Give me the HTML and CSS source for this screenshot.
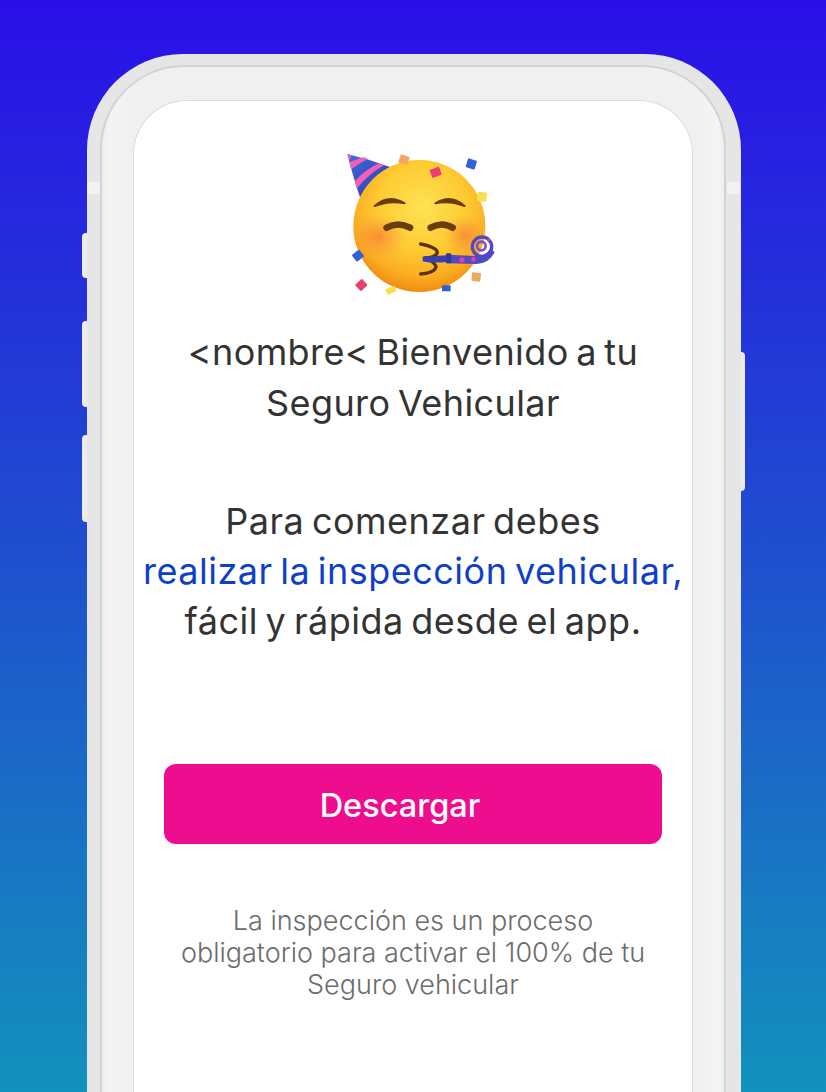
FILE: index.html
```html
<!DOCTYPE html>
<html lang="es">
<head>
    <meta charset="UTF-8">
    <meta name="viewport" content="width=device-width, initial-scale=1.0">
    <title>Seguro Vehicular</title>
    <link rel="stylesheet" href="styles.css">
</head>
<body>

    <div class="phone">
        <span class="side-btn side-silent"></span>
        <span class="side-btn side-vol-up"></span>
        <span class="side-btn side-vol-down"></span>
        <span class="side-btn side-power"></span>
        <span class="band band-left"></span>
        <span class="band band-right"></span>

        <div class="phone-rim">
            <div class="phone-bezel">
                <div class="screen">

                    <svg class="party-emoji" viewBox="0 0 540 510" width="180" height="170">
                        <defs>
                            <radialGradient id="face" cx="52%" cy="36%" r="66%">
                                <stop offset="0" stop-color="#ffe254"/>
                                <stop offset="0.5" stop-color="#fecb32"/>
                                <stop offset="0.8" stop-color="#fbac22"/>
                                <stop offset="1" stop-color="#ee860e"/>
                            </radialGradient>
                            <radialGradient id="blush">
                                <stop offset="0" stop-color="#f9793a" stop-opacity="0.7"/>
                                <stop offset="0.6" stop-color="#fa8a3a" stop-opacity="0.32"/>
                                <stop offset="1" stop-color="#fb9a3c" stop-opacity="0"/>
                            </radialGradient>
                            <linearGradient id="hat" x1="0" y1="0" x2="1" y2="1">
                                <stop offset="0" stop-color="#3f6ae0"/>
                                <stop offset="1" stop-color="#2c3aa8"/>
                            </linearGradient>
                        </defs>

                        <!-- hat -->
                        <path d="M52 42 Q120 58 182 82 L90 172 Q66 100 52 42Z" fill="url(#hat)"/>
                        <path d="M58 66 Q80 58 100 52 L114 56 Q88 68 64 88Z" fill="#f060b8"/>
                        <path d="M74 124 Q102 92 146 70 L162 76 Q116 102 80 146Z" fill="#f060b8"/>
                        <path d="M52 42 L66 46 L58 60Z" fill="#f060b8"/>

                        <!-- face -->
                        <circle cx="268" cy="258" r="198" fill="url(#face)"/>
                        <ellipse cx="145" cy="290" rx="86" ry="66" fill="url(#blush)"/>
                        <ellipse cx="405" cy="285" rx="66" ry="60" fill="url(#blush)"/>

                        <!-- brows and eyes -->
                        <path d="M134 198 Q176 160 224 190 Q178 180 134 198Z" fill="#6b3d0c" stroke="#6b3d0c" stroke-width="6" stroke-linejoin="round"/>
                        <path d="M316 190 Q362 160 404 198 Q360 180 316 190Z" fill="#6b3d0c" stroke="#6b3d0c" stroke-width="6" stroke-linejoin="round"/>
                        <path d="M170 263 Q204 244 240 263" fill="none" stroke="#6b3d0c" stroke-width="20" stroke-linecap="round"/>
                        <path d="M302 263 Q336 244 368 263" fill="none" stroke="#6b3d0c" stroke-width="20" stroke-linecap="round"/>

                        <!-- mouth -->
                        <path d="M272 312 Q322 322 322 338 Q318 352 284 354 Q318 368 318 382 Q312 400 272 402" fill="none" stroke="#5b320a" stroke-width="10" stroke-linecap="round" stroke-linejoin="round"/>

                        <!-- blower -->
                        <path d="M278 350 L350 346 L350 366 Q300 370 278 364Z" fill="#3a3fb0"/>
                        <path d="M350 344 L440 348 Q470 346 480 326 L494 336 Q478 370 440 372 L350 370Z" fill="#5048c4"/>
                        <circle cx="396" cy="360" r="8" fill="#e0409e"/>
                        <circle cx="430" cy="358" r="7" fill="#e0409e"/>
                        <rect x="348" y="340" width="16" height="30" rx="3" fill="#2a3aa0"/>
                        <circle cx="456" cy="320" r="29" fill="none" stroke="#4f48c8" stroke-width="10"/>
                        <circle cx="454" cy="318" r="13" fill="none" stroke="#7a50d0" stroke-width="8"/>
                        <circle cx="476" cy="300" r="4" fill="#e0409e"/>

                        <!-- confetti -->
                        <rect x="208" y="46" width="28" height="26" rx="3" fill="#f0a860" transform="rotate(18 222 59)"/>
                        <rect x="302" y="84" width="30" height="26" rx="3" fill="#e83c78" transform="rotate(-20 317 97)"/>
                        <rect x="410" y="58" width="28" height="28" rx="3" fill="#2f62d8" transform="rotate(18 424 72)"/>
                        <rect x="442" y="156" width="28" height="28" rx="3" fill="#f8e050" transform="rotate(6 456 170)"/>
                        <rect x="70" y="334" width="28" height="26" rx="3" fill="#2f62d8" transform="rotate(-38 84 347)"/>
                        <rect x="80" y="422" width="28" height="26" rx="3" fill="#e84068" transform="rotate(-42 94 435)"/>
                        <rect x="168" y="442" width="30" height="18" rx="2" fill="#f8e050" transform="rotate(-24 183 451)"/>
                        <rect x="336" y="436" width="26" height="18" rx="2" fill="#2f62d8"/>
                        <rect x="425" y="398" width="27" height="26" rx="3" fill="#f0a860" transform="rotate(6 438 411)"/>
                    </svg>

                    <h1 class="welcome">&lt;nombre&lt; Bienvenido a tu<br>Seguro Vehicular</h1>

                    <p class="intro">
                        Para comenzar debes<br>
                        <span class="highlight">realizar la inspección vehicular,</span><br>
                        fácil y rápida desde el app.
                    </p>

                    <a class="download-btn" href="#">Descargar</a>

                    <p class="note">
                        La inspección es un proceso<br>
                        obligatorio para activar el 100% de tu<br>
                        Seguro vehicular
                    </p>

                </div>
            </div>
        </div>
    </div>

</body>
</html>
```

FILE: styles.css
```css
html, body {
    margin: 0;
    height: 1092px;
    overflow: hidden;
}
body {
    font-family: Inter, "Open Sans", sans-serif;
    background: linear-gradient(180deg, #2a0fe8 0%, #2335d8 30%, #1f4ecf 50%, #1a6cc6 72%, #1292bc 100%);
    padding: 54px 0 0 87px;
    box-sizing: border-box;
}

/* phone frame */
.phone {
    position: relative;
    width: 654px;
    height: 1038px;
}
.phone-rim {
    background: #e6e6e6;
    border-radius: 96px 96px 0 0;
    padding: 11px 15px 0 13px;
    height: 100%;
    box-sizing: border-box;
}
.phone-bezel {
    background: linear-gradient(90deg, #ececec 0, #f4f4f4 8px, #f0f0f0 32px, #f0f0f0 592px, #f5f5f5 616px, #ececec 624px);
    border: solid #d3d3d3;
    border-width: 2px 2px 0 2px;
    border-radius: 84px 84px 0 0;
    padding: 33px 31px 0 31px;
    height: 100%;
    box-sizing: border-box;
}
.side-btn {
    position: absolute;
    background: #ececec;
}
.side-silent, .side-vol-up, .side-vol-down {
    left: -5px;
    width: 5px;
    border-radius: 4px 0 0 4px;
}
.side-silent { top: 179px; height: 45px; }
.side-vol-up { top: 267px; height: 86px; }
.side-vol-down { top: 381px; height: 87px; }
.side-power {
    right: -4px;
    top: 298px;
    width: 4px;
    height: 139px;
    border-radius: 0 4px 4px 0;
}
.band {
    position: absolute;
    top: 128px;
    height: 12px;
    width: 13px;
    background: #f2f2f2;
}
.band-left { left: 0; }
.band-right { right: 1px; }

/* screen */
.screen {
    background: #fff;
    border: solid #dcdcdc;
    border-width: 1px 1px 0 1px;
    border-radius: 54px 54px 0 0;
    height: 100%;
    box-sizing: border-box;
    display: flex;
    flex-direction: column;
    align-items: center;
    text-align: center;
    color: #333;
}
.party-emoji {
    display: block;
    margin: 39px 0 0 14px;
    filter: blur(0.4px);
}
.welcome {
    margin: 17px 0 0;
    font-size: 36px;
    font-weight: 400;
    line-height: 51px;
    letter-spacing: 0.4px;
    word-spacing: -3px;
}
.intro {
    margin: 67px 0 0;
    font-size: 36px;
    line-height: 50px;
    letter-spacing: 0.5px;
    word-spacing: -3px;
}
.highlight { color: #0f3fc9; }
.download-btn {
    display: block;
    box-sizing: border-box;
    width: 498px;
    height: 80px;
    margin-top: 118px;
    padding-right: 26px;
    background: #ee0d8f;
    border-radius: 12px;
    color: #fff;
    font-size: 32.5px;
    font-weight: 500;
    line-height: 84px;
    text-decoration: none;
}
.note {
    margin: 61px 0 0;
    font-size: 27px;
    font-weight: 300;
    line-height: 32px;
    color: #6c6c6c;
}
```
